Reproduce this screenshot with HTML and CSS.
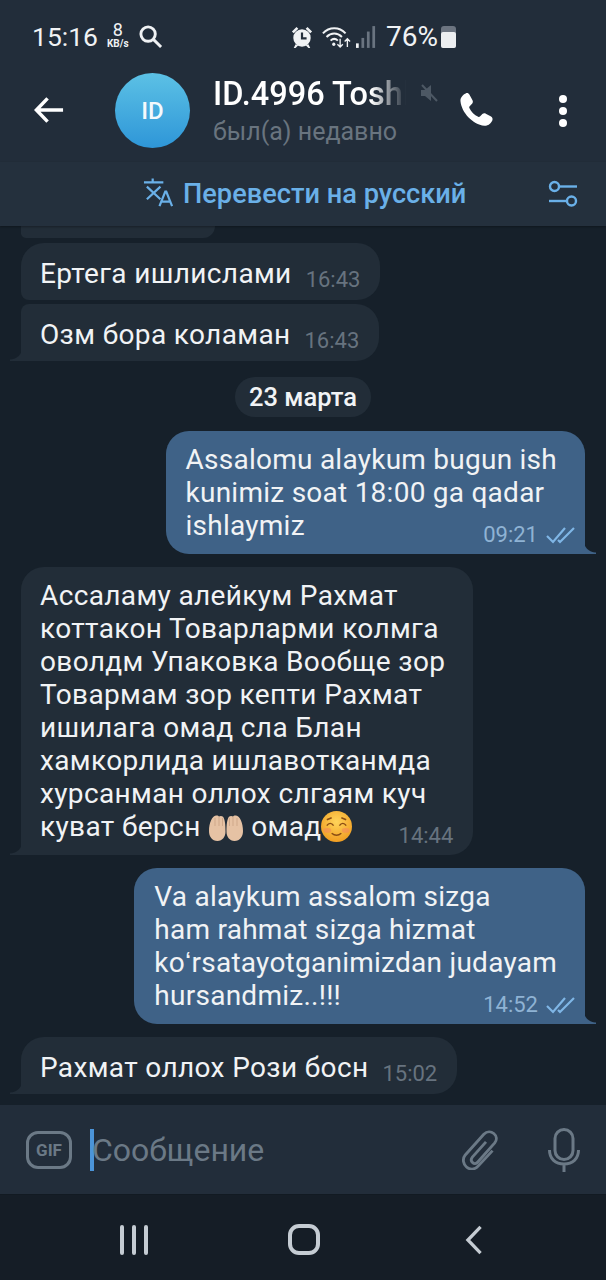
FILE: index.html
```html
<!DOCTYPE html>
<html lang="ru">
<head>
    <meta charset="UTF-8">
    <meta name="viewport" content="width=device-width, initial-scale=1.0">
    <title>ID.4996 Toshl</title>
    <link rel="stylesheet" href="styles.css">
</head>
<body>
    <div id="phone">
        <header id="top">
            <div class="status-bar">
                <div class="status-left">
                    <span class="clock">15:16</span>
                    <span class="speed"><b>8</b><i>KB/s</i></span>
                    <svg class="ic-search" viewBox="0 0 26 26"><circle cx="10.5" cy="10.5" r="7.5"/><path d="M16 16l8 8"/></svg>
                </div>
                <div class="status-right">
                    <svg class="ic-alarm" viewBox="0 0 24 26">
                        <circle cx="12" cy="14" r="9.5" fill="#f0f2f4"/>
                        <path d="M1 7l5-5 2 2-5 5zM23 7l-5-5-2 2 5 5zM5 21l-2 4h2l3-3zM19 21l2 4h-2l-3-3z" fill="#f0f2f4"/>
                        <path d="M12 8v6.5h5" fill="none" stroke="#232e3b" stroke-width="2.4"/>
                    </svg>
                    <svg class="ic-wifi" viewBox="0 0 32 26">
                        <g fill="none" stroke="#f0f2f4" stroke-width="2.2">
                            <path d="M1 9c7-7.500 18-7.500 25 0"/>
                            <path d="M5 13c5-5 12-5 17 0"/>
                            <path d="M9.500 17c2.500-2.500 5.500-2.500 8 0"/>
                        </g>
                        <circle cx="13" cy="21" r="1.800" fill="#f0f2f4"/>
                        <path d="M20 15v9m-3-3l3 3 3-3M28 24v-9m-3 3l3-3 3 3" fill="none" stroke="#f0f2f4" stroke-width="1.500"/>
                    </svg>
                    <svg class="ic-signal" viewBox="0 0 22 26">
                        <rect x="0" y="20" width="3" height="5" fill="#f0f2f4"/>
                        <rect x="6" y="14" width="3" height="11" fill="#6a7480"/>
                        <rect x="12" y="7" width="3" height="18" fill="#6a7480"/>
                        <rect x="18" y="1" width="3" height="24" fill="#6a7480"/>
                    </svg>
                    <span class="battery-text">76%</span>
                    <div class="battery"><div class="battery-fill"></div></div>
                </div>
            </div>
            <div class="chat-head">
                <svg class="ic-back" viewBox="0 0 32 28"><path d="M30 14H3M14 2L2.500 14 14 26"/></svg>
                <div class="avatar">ID</div>
                <div class="chat-info">
                    <div class="chat-title">
                        <span class="chat-name">ID.4996 Toshl</span>
                        <svg class="ic-mute" viewBox="0 0 18 20">
                            <path d="M1 7h4l6-5v16l-6-5H1z" fill="#4d5864"/>
                            <path d="M2 2l15 16" stroke="#4d5864" stroke-width="2"/>
                        </svg>
                    </div>
                    <div class="chat-status">был(а) недавно</div>
                </div>
                <svg class="ic-phone" viewBox="0 0 24 24"><path d="M5.500 1.500c.9-.4 1.900-.1 2.400.8l1.900 3.600c.4.800.3 1.600-.3 2.200L8 9.600c-.3.300-.4.700-.2 1.100 1.200 2.500 3.100 4.400 5.600 5.600.4.200.8.100 1.100-.2l1.500-1.500c.6-.6 1.500-.7 2.200-.3l3.300 1.800c.9.500 1.200 1.600.8 2.500-.9 2-2.900 3.500-5 3.300C9.700 20.900 2.900 13.600 2.200 6.400 2 4.300 3.500 2.400 5.500 1.500z"/></svg>
                <div class="dots"><span></span><span></span><span></span></div>
            </div>
        </header>
        <div class="translate-bar">
            <div class="translate-main">
                <svg class="ic-translate" viewBox="0 0 32 32">
                    <path d="M1 5.500h20M10 1.500v4M4 10l14 13M18 10L4 23M17 30l6-15h1l6 15M19 25.500h9" fill="none" stroke="#6ab0e8" stroke-width="2.300"/>
                </svg>
                <span>Перевести на русский</span>
            </div>
            <svg class="ic-sliders" viewBox="0 0 30 28">
                <g fill="none" stroke="#6ab0e8" stroke-width="2.400">
                    <circle cx="6.500" cy="6.500" r="4.500"/>
                    <path d="M11 6.500h18"/>
                    <circle cx="23.500" cy="21" r="4.500"/>
                    <path d="M1 21h18"/>
                </g>
            </svg>
        </div>

        <main id="messages">
            <div class="bubble-stub"></div>
            <div class="bubble in first line">
                <span class="text">Ертега ишлислами</span>
                <span class="meta">16:43</span>
            </div>
            <div class="bubble in last line tail">
                <span class="text">Озм бора коламан</span>
                <span class="meta">16:43</span>
            </div>
            <div class="date-pill">23 марта</div>
            <div class="bubble out tail">
                <span class="text">Assalomu alaykum bugun ish<br>kunimiz soat 18:00 ga qadar<br>ishlaymiz</span>
                <span class="meta">09:21 <svg class="ic-check" viewBox="0 0 30 18"><path d="M1 10l6 6L19 2M12 14l2 2L28 2"/></svg></span>
            </div>
            <div class="bubble in tail">
                <span class="text">Ассаламу алейкум Рахмат<br>коттакон Товарларми колмга<br>оволдм Упаковка Вообще зор<br>Товармам зор кепти Рахмат<br>ишилага омад сла Блан<br>хамкорлида ишлавотканмда<br>хурсанман оллох слгаям куч<br>куват берсн <svg class="emoji palms" viewBox="0 0 36 28">
                    <path d="M1 17C1 9 4 2 8 1.500c1.500-.3 2.500.3 3 1 1-.8 3-.8 4 .3 2 2.500 2.500 8 2.500 15 0 5-3 9.200-8 9.200C4 27 1 22.500 1 17z" fill="#e6c2a4"/>
                    <path d="M35 17c0-8-3-15-7-15.500-1.500-.3-2.500.3-3 1-1-.8-3-.8-4 .3-2 2.500-2.500 8-2.500 15 0 5 3 9.200 8 9.200C32 27 35 22.500 35 17z" fill="#e6c2a4"/>
                    <path d="M7 4v8M11 3v9M14.500 4v8M21.500 4v8M25 3v9M29 4v8" fill="none" stroke="#cfa88a" stroke-width="1"/>
                </svg> омад<svg class="emoji smile" viewBox="0 0 32 32">
                    <defs><radialGradient id="face" cx="50%" cy="35%" r="70%"><stop offset="0" stop-color="#ffd45a"/><stop offset="1" stop-color="#f09a1e"/></radialGradient></defs>
                    <circle cx="16" cy="16" r="16" fill="url(#face)"/>
                    <path d="M6 15c2-3 5-3 7 0M19 15c2-3 5-3 7 0M11 23c3 2.500 7 2.500 10 0M6 9l5-2M26 9l-5-2" fill="none" stroke="#8a4d14" stroke-width="1.500"/>
                    <ellipse cx="6.500" cy="20" rx="4" ry="2.500" fill="#f58a5a" opacity=".6"/>
                    <ellipse cx="25.500" cy="20" rx="4" ry="2.500" fill="#f58a5a" opacity=".6"/>
                </svg></span>
                <span class="meta">14:44</span>
            </div>
            <div class="bubble out tail">
                <span class="text">Va alaykum assalom sizga<br>ham rahmat sizga hizmat<br>koʻrsatayotganimizdan judayam<br>hursandmiz..!!!</span>
                <span class="meta">14:52 <svg class="ic-check" viewBox="0 0 30 18"><path d="M1 10l6 6L19 2M12 14l2 2L28 2"/></svg></span>
            </div>
            <div class="bubble in tail line">
                <span class="text">Рахмат оллох Рози босн</span>
                <span class="meta">15:02</span>
            </div>
        </main>

        <div class="composer">
            <div class="gif-btn">GIF</div>
            <div class="input-box"><span class="caret"></span><span class="placeholder">Сообщение</span></div>
            <svg class="ic-clip" viewBox="3 2 33 36"><path d="M25 13L12.500 27c-3 4 2 8 5 4.500L33 14c5-6.500-4-14-10-8L6 25c-6 8 5 18 12 10l13-14"/></svg>
            <svg class="ic-mic" viewBox="0 0 32 44"><rect x="7" y="1.500" width="18" height="30" rx="9"/><path d="M1.500 22c0 9 6 14 14.500 14s14.500-5 14.500-14M16 36v8"/></svg>
        </div>

        <nav class="nav-bar">
            <div class="nav-recent"><span></span><span></span><span></span></div>
            <div class="nav-home"></div>
            <svg class="ic-nav-back" viewBox="0 0 18 32"><path d="M16 2L2.500 16 16 30"/></svg>
        </nav>
    </div>
</body>
</html>
```
FILE: styles.css
```css
* {
    box-sizing: border-box;
}

body {
    margin: 0;
    background-color: #16202a;
    font-family: Roboto, "Liberation Sans", sans-serif;
}

#phone {
    width: 606px;
    height: 1280px;
    display: flex;
    flex-direction: column;
    overflow: hidden;
}

svg {
    flex: none;
    display: block;
}

/* top bars */
#top {
    flex: none;
    height: 162px;
    background-color: #222d3a;
    color: #fff;
}

.status-bar {
    height: 73px;
    display: flex;
    justify-content: space-between;
    align-items: center;
    padding: 0 150px 0 32px;
}

.status-left, .status-right {
    display: flex;
    align-items: center;
}

.clock {
    font-size: 26.500px;
    color: #f0f2f4;
}

.speed {
    display: flex;
    flex-direction: column;
    align-items: center;
    margin-left: 9px;
    line-height: 1;
    color: #f0f2f4;
}

.speed b {
    font-size: 18px;
    font-weight: 400;
    margin-top: -4px;
}

.speed i {
    font-size: 10px;
    font-style: normal;
    font-weight: 700;
}

.ic-search {
    width: 25px;
    height: 25px;
    margin-left: 9px;
    fill: none;
    stroke: #f0f2f4;
    stroke-width: 3;
}

.ic-alarm {
    width: 22px;
    height: 24px;
}

.ic-wifi {
    width: 29px;
    height: 24px;
    margin-left: 9px;
}

.ic-signal {
    width: 20px;
    height: 24px;
    margin-left: 5px;
}

.battery-text {
    font-size: 28px;
    margin-left: 10px;
    color: #f0f2f4;
}

.battery {
    width: 15px;
    height: 22px;
    margin-left: 3px;
    background-color: #6c7480;
    border-radius: 3px;
    display: flex;
    align-items: flex-end;
}

.battery-fill {
    width: 100%;
    height: 16px;
    background-color: #eceef0;
    border-radius: 2px;
}

.chat-head {
    height: 89px;
    display: flex;
    align-items: flex-start;
    padding-left: 34px;
}

.ic-back {
    width: 31px;
    height: 28px;
    margin-top: 23px;
    fill: none;
    stroke: #fff;
    stroke-width: 3.600;
}

.avatar {
    width: 75px;
    height: 75px;
    margin-left: 50px;
    border-radius: 50%;
    background: linear-gradient(#5cc1e5, #2e96d8);
    display: flex;
    align-items: center;
    justify-content: center;
    font-size: 24px;
    font-weight: 500;
    color: #f4f9fc;
}

.chat-info {
    width: 224px;
    margin-left: 23px;
}

.chat-title {
    display: flex;
    align-items: center;
    height: 42px;
}

.chat-name {
    width: 207px;
    flex: none;
    font-size: 32.500px;
    font-weight: 500;
    white-space: nowrap;
    -webkit-mask-image: linear-gradient(to right, #000 158px, transparent 193px);
    mask-image: linear-gradient(to right, #000 158px, transparent 193px);
}

.ic-mute {
    width: 18px;
    height: 20px;
    margin-top: -2px;
}

.chat-status {
    margin-top: 2px;
    font-size: 25px;
    color: #69747f;
}

.ic-phone {
    width: 38px;
    height: 38px;
    margin: 18px 0 0 20px;
    fill: #fff;
}

.dots {
    display: flex;
    flex-direction: column;
    gap: 4px;
    margin: 22px 0 0 64px;
}

.dots span {
    width: 8px;
    height: 8px;
    border-radius: 50%;
    background-color: #fff;
}

.translate-bar {
    flex: none;
    height: 64px;
    background-color: #24303d;
    display: flex;
    align-items: center;
    justify-content: space-between;
    padding: 0 28px 0 143px;
    box-shadow: 0 1px 2px rgba(0, 0, 0, 0.3);
    position: relative;
    z-index: 1;
}

.translate-main {
    display: flex;
    align-items: center;
    gap: 9px;
    font-size: 27.200px;
    font-weight: 500;
    color: #6ab0e8;
}

.ic-translate {
    width: 31px;
    height: 31px;
    margin-top: -4px;
}

.ic-sliders {
    width: 30px;
    height: 28px;
}

/* messages */
#messages {
    flex: 1;
    min-height: 0;
    display: flex;
    flex-direction: column;
    align-items: flex-start;
    padding: 0 21px;
    background-color: #16202a;
}

.bubble-stub {
    flex: none;
    width: 194px;
    height: 12px;
    margin-bottom: 5px;
    background-color: #222d38;
    border-radius: 0 0 20px 8px;
}

.bubble {
    flex: none;
    position: relative;
    display: grid;
    padding: 12px 20px 12px 19px;
    font-size: 28px;
    line-height: 33px;
    letter-spacing: 0.36px;
    color: #f1f3f5;
    border-radius: 23px;
    margin-bottom: 13px;
}

.bubble.in {
    background-color: #222d38;
}

.bubble.out {
    align-self: flex-end;
    background-color: #3f6287;
    letter-spacing: 0.25px;
    padding-left: 20px;
}

.bubble.line {
    display: flex;
    gap: 14px;
    padding-top: 14px;
    padding-bottom: 10px;
}

.bubble.first {
    margin-bottom: 4px;
    border-bottom-left-radius: 8px;
}

.bubble.last {
    border-top-left-radius: 8px;
}

.text {
    grid-area: 1 / 1;
    white-space: nowrap;
    padding-right: 8px;
}

.bubble.line .text {
    padding-right: 0;
}

.meta {
    grid-area: 1 / 1;
    justify-self: end;
    align-self: end;
    display: flex;
    align-items: center;
    gap: 8px;
    font-size: 22px;
    line-height: 24px;
    letter-spacing: 0;
    color: #67737f;
    margin-bottom: -5px;
}

.bubble.line .meta {
    margin-bottom: -2px;
}

.bubble.out .meta {
    color: #8fb3d4;
    margin-right: -11px;
}

.ic-check {
    width: 30px;
    height: 18px;
    fill: none;
    stroke: #7fb6e6;
    stroke-width: 2.200;
}

.bubble.tail.in {
    border-bottom-left-radius: 0;
}

.bubble.tail.out {
    border-bottom-right-radius: 0;
}

.bubble.tail::after {
    content: "";
    position: absolute;
    bottom: 0;
    width: 11px;
    height: 14px;
}

.bubble.tail.in::after {
    left: -11px;
    background: radial-gradient(circle at 0 0, transparent 12px, #222d38 13px);
}

.bubble.tail.out::after {
    right: -11px;
    background: radial-gradient(circle at 100% 0, transparent 12px, #3f6287 13px);
}

.emoji {
    display: inline-block;
    vertical-align: -6px;
}

.palms {
    width: 36px;
    height: 28px;
}

.smile {
    width: 31px;
    height: 31px;
    margin-left: -1px;
}

.date-pill {
    flex: none;
    align-self: center;
    margin: 3px 0 14px;
    height: 40px;
    padding: 0 14px;
    display: flex;
    align-items: center;
    border-radius: 20px;
    background-color: #222d38;
    font-size: 25.500px;
    font-weight: 500;
    color: #f1f3f5;
}

/* bottom */
.composer {
    height: 89px;
    display: flex;
    align-items: center;
    background-color: #222d3a;
    padding-left: 26px;
    flex: none;
}

.gif-btn {
    width: 46px;
    height: 38px;
    border: 3px solid #6b7986;
    border-radius: 12px;
    display: flex;
    align-items: center;
    justify-content: center;
    font-size: 17px;
    font-weight: 700;
    color: #6b7986;
}

.input-box {
    width: 362px;
    margin-left: 18px;
    display: flex;
    align-items: center;
}

.caret {
    width: 4px;
    height: 42px;
    background-color: #4b94d8;
}

.placeholder {
    margin-left: -2px;
    font-size: 32px;
    color: #6b7986;
}

.ic-clip {
    width: 36px;
    height: 41px;
    margin-left: 10px;
    fill: none;
    stroke: #6b7986;
    stroke-width: 2.600;
}

.ic-mic {
    width: 32px;
    height: 44px;
    margin-left: 50px;
    fill: none;
    stroke: #6b7986;
    stroke-width: 3;
}

.nav-bar {
    height: 86px;
    flex: none;
    background-color: #151d26;
    border-top: 1px solid #121a22;
    display: flex;
    align-items: center;
    padding: 4px 0 0 120px;
}

.nav-recent {
    display: flex;
    gap: 8px;
}

.nav-recent span {
    width: 4px;
    height: 30px;
    border-radius: 2px;
    background-color: #c5ccd3;
}

.nav-home {
    width: 32px;
    height: 31px;
    margin-left: 140px;
    border: 4px solid #c5ccd3;
    border-radius: 11px;
}

.ic-nav-back {
    width: 18px;
    height: 30px;
    margin-left: 145px;
    fill: none;
    stroke: #c5ccd3;
    stroke-width: 3.500;
}
```
